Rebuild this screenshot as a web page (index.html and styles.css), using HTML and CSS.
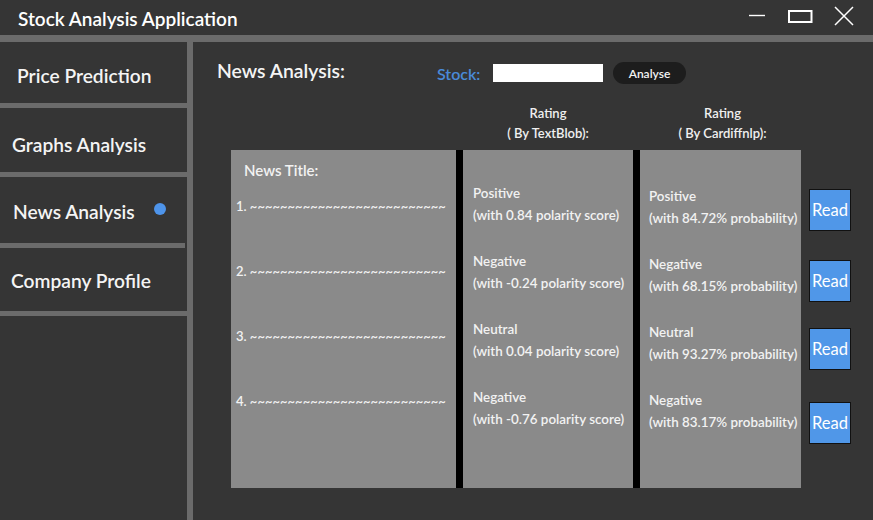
FILE: index.html
```html
<!DOCTYPE html>
<html>
<head>
<meta charset="utf-8">
<link rel="stylesheet" href="styles.css">
</head>
<body>
<div class="window">
  <header class="titlebar">
    <div class="app-title">Stock Analysis Application</div>
    <div class="controls">
      <svg class="ctl ctl-min" width="18" height="35" viewBox="0 0 18 35"><line x1="1" y1="15.5" x2="17" y2="15.5" stroke="#fff" stroke-width="1.4"/></svg>
      <svg class="ctl ctl-max" width="26" height="35" viewBox="0 0 26 35"><rect x="2" y="11" width="22.5" height="11" fill="none" stroke="#fff" stroke-width="2"/></svg>
      <svg class="ctl ctl-close" width="22" height="35" viewBox="0 0 22 35"><path d="M2 7 L20 25 M20 7 L2 25" stroke="#fff" stroke-width="1.5" fill="none"/></svg>
    </div>
  </header>
  <div class="hsep"></div>
  <div class="body">
    <nav class="sidebar">
      <div class="nav-item nav-1"><span>Price Prediction</span></div>
      <div class="nav-sep"></div>
      <div class="nav-item nav-2"><span>Graphs Analysis</span></div>
      <div class="nav-sep"></div>
      <div class="nav-item nav-3"><span>News Analysis</span><span class="dot"></span></div>
      <div class="nav-sep nav-sep-short"></div>
      <div class="nav-item nav-4"><span>Company Profile</span></div>
      <div class="nav-sep"></div>
    </nav>
    <div class="vsep"></div>
    <main class="main">
      <div class="toolbar">
        <div class="page-title">News Analysis:</div>
        <div class="stock-label">Stock:</div>
        <div class="stock-input"></div>
        <div class="analyse-btn">Analyse</div>
      </div>
      <div class="rating-head">
        <div class="rh-spacer"></div>
        <div class="rh rh-blob"><div>Rating</div><div>( By TextBlob):</div></div>
        <div class="rh rh-card"><div>Rating</div><div>( By Cardiffnlp):</div></div>
      </div>
      <div class="table-row">
        <div class="panel">
          <div class="col col-titles">
            <div class="news-head">News Title:</div>
            <div class="news-item">1. ~~~~~~~~~~~~~~~~~~~~~~~~~~</div>
            <div class="news-item">2. ~~~~~~~~~~~~~~~~~~~~~~~~~~</div>
            <div class="news-item">3. ~~~~~~~~~~~~~~~~~~~~~~~~~~</div>
            <div class="news-item">4. ~~~~~~~~~~~~~~~~~~~~~~~~~~</div>
          </div>
          <div class="bar"></div>
          <div class="col col-blob">
            <div class="rating"><div>Positive</div><div>(with 0.84 polarity score)</div></div>
            <div class="rating"><div>Negative</div><div>(with -0.24 polarity score)</div></div>
            <div class="rating"><div>Neutral</div><div>(with 0.04 polarity score)</div></div>
            <div class="rating"><div>Negative</div><div>(with -0.76 polarity score)</div></div>
          </div>
          <div class="bar"></div>
          <div class="col col-card">
            <div class="rating"><div>Positive</div><div>(with 84.72% probability)</div></div>
            <div class="rating"><div>Negative</div><div>(with 68.15% probability)</div></div>
            <div class="rating"><div>Neutral</div><div>(with 93.27% probability)</div></div>
            <div class="rating"><div>Negative</div><div>(with 83.17% probability)</div></div>
          </div>
        </div>
        <div class="reads">
          <div class="read-btn r1">Read</div>
          <div class="read-btn r2">Read</div>
          <div class="read-btn r3">Read</div>
          <div class="read-btn r4">Read</div>
        </div>
      </div>
    </main>
  </div>
</div>
</body>
</html>
```
FILE: styles.css
```css
* { box-sizing: border-box; }
html, body { margin: 0; padding: 0; }
body {
  width: 873px;
  height: 520px;
  overflow: hidden;
  background: #353535;
  font-family: "Lato", "Open Sans", sans-serif;
  font-weight: 600;
  color: #ffffff;
}
.window { display: flex; flex-direction: column; height: 520px; }

.titlebar {
  height: 35px;
  display: flex;
  align-items: center;
  justify-content: space-between;
  padding: 0 18px 0 18px;
  background: #353535;
}
.app-title { font-size: 19px; line-height: 35px; padding-top: 2px; }
.controls { display: flex; align-items: flex-start; height: 35px; }
.ctl { display: block; }
.ctl-max { margin-left: 21px; }
.ctl-close { margin-left: 20px; }

.hsep { height: 7px; background: #6b6b6b; }

.body { flex: 1; display: flex; }
.sidebar { width: 187px; display: flex; flex-direction: column; }
.nav-item {
  display: flex;
  align-items: center;
  font-size: 19.2px;
  color: #f4f4f4;
  padding-left: 12px;
}
.nav-1 { height: 61px; padding-left: 17px; padding-top: 6px; }
.nav-2 { height: 64px; padding-top: 8px; }
.nav-3 { height: 66px; padding-left: 13px; padding-top: 2px; }
.nav-4 { height: 63px; padding-left: 11px; padding-top: 2px; }
.nav-sep { height: 5px; background: #6b6b6b; }
.nav-sep-short { width: 185px; }
.dot {
  width: 12px; height: 12px; border-radius: 50%;
  background: #4e94ea;
  margin-left: 19px;
  margin-top: -4px;
}
.vsep { width: 6px; background: #6b6b6b; }

.main { flex: 1; padding: 18px 0 0 24px; }
.toolbar { display: flex; align-items: center; height: 26px; }
.page-title { width: 220px; font-size: 19.4px; color: #f4f4f4; margin-top: -5px; }
.stock-label { font-size: 16px; color: #4a8ad9; width: 56px; }
.stock-input { width: 110px; height: 18px; background: #ffffff; }
.analyse-btn {
  margin-left: 10px;
  width: 73px; height: 22px;
  border-radius: 11px;
  background: #1d1d1d;
  font-size: 12px;
  display: flex; align-items: center; justify-content: center;
  color: #f4f4f4;
}

.rating-head {
  display: flex;
  margin-top: 17px;
  margin-left: 14px;
  font-size: 13px;
  line-height: 20px;
  color: #f0f0f0;
}
.rh-spacer { width: 232px; }
.rh { text-align: center; }
.rh-blob { width: 170px; }
.rh-card { width: 161px; margin-left: 7px; padding-left: 4px; }

.table-row { display: flex; margin-top: 7px; margin-left: 14px; }
.panel {
  display: grid;
  grid-template-columns: 225px 7px 170px 7px 161px;
  height: 338px;
  background: #8a8a8a;
}
.bar { background: #000000; }
.col { color: #f2f2f2; }
.col-titles { padding: 10px 0 0 5px; }
.news-head { font-size: 15px; line-height: 20px; padding-left: 8px; }
.news-item { font-size: 13px; line-height: 20px; margin-top: 45px; white-space: nowrap; }
.col-titles .news-head + .news-item { margin-top: 16px; }

.col-blob { padding: 32px 0 0 10px; }
.col-card { padding: 35px 0 0 9px; }
.rating { font-size: 13.4px; line-height: 22px; margin-bottom: 24px; white-space: nowrap; }

.reads { display: flex; flex-direction: column; margin-left: 8px; }
.read-btn {
  width: 42px; height: 42px;
  background: #5097e8;
  border: 1.5px solid #111111;
  font-size: 16.5px;
  font-weight: 400;
  color: #ffffff;
  display: flex; align-items: center; justify-content: center;
}
.r1 { margin-top: 39px; }
.r2 { margin-top: 29px; }
.r3 { margin-top: 26px; }
.r4 { margin-top: 32px; }
```
